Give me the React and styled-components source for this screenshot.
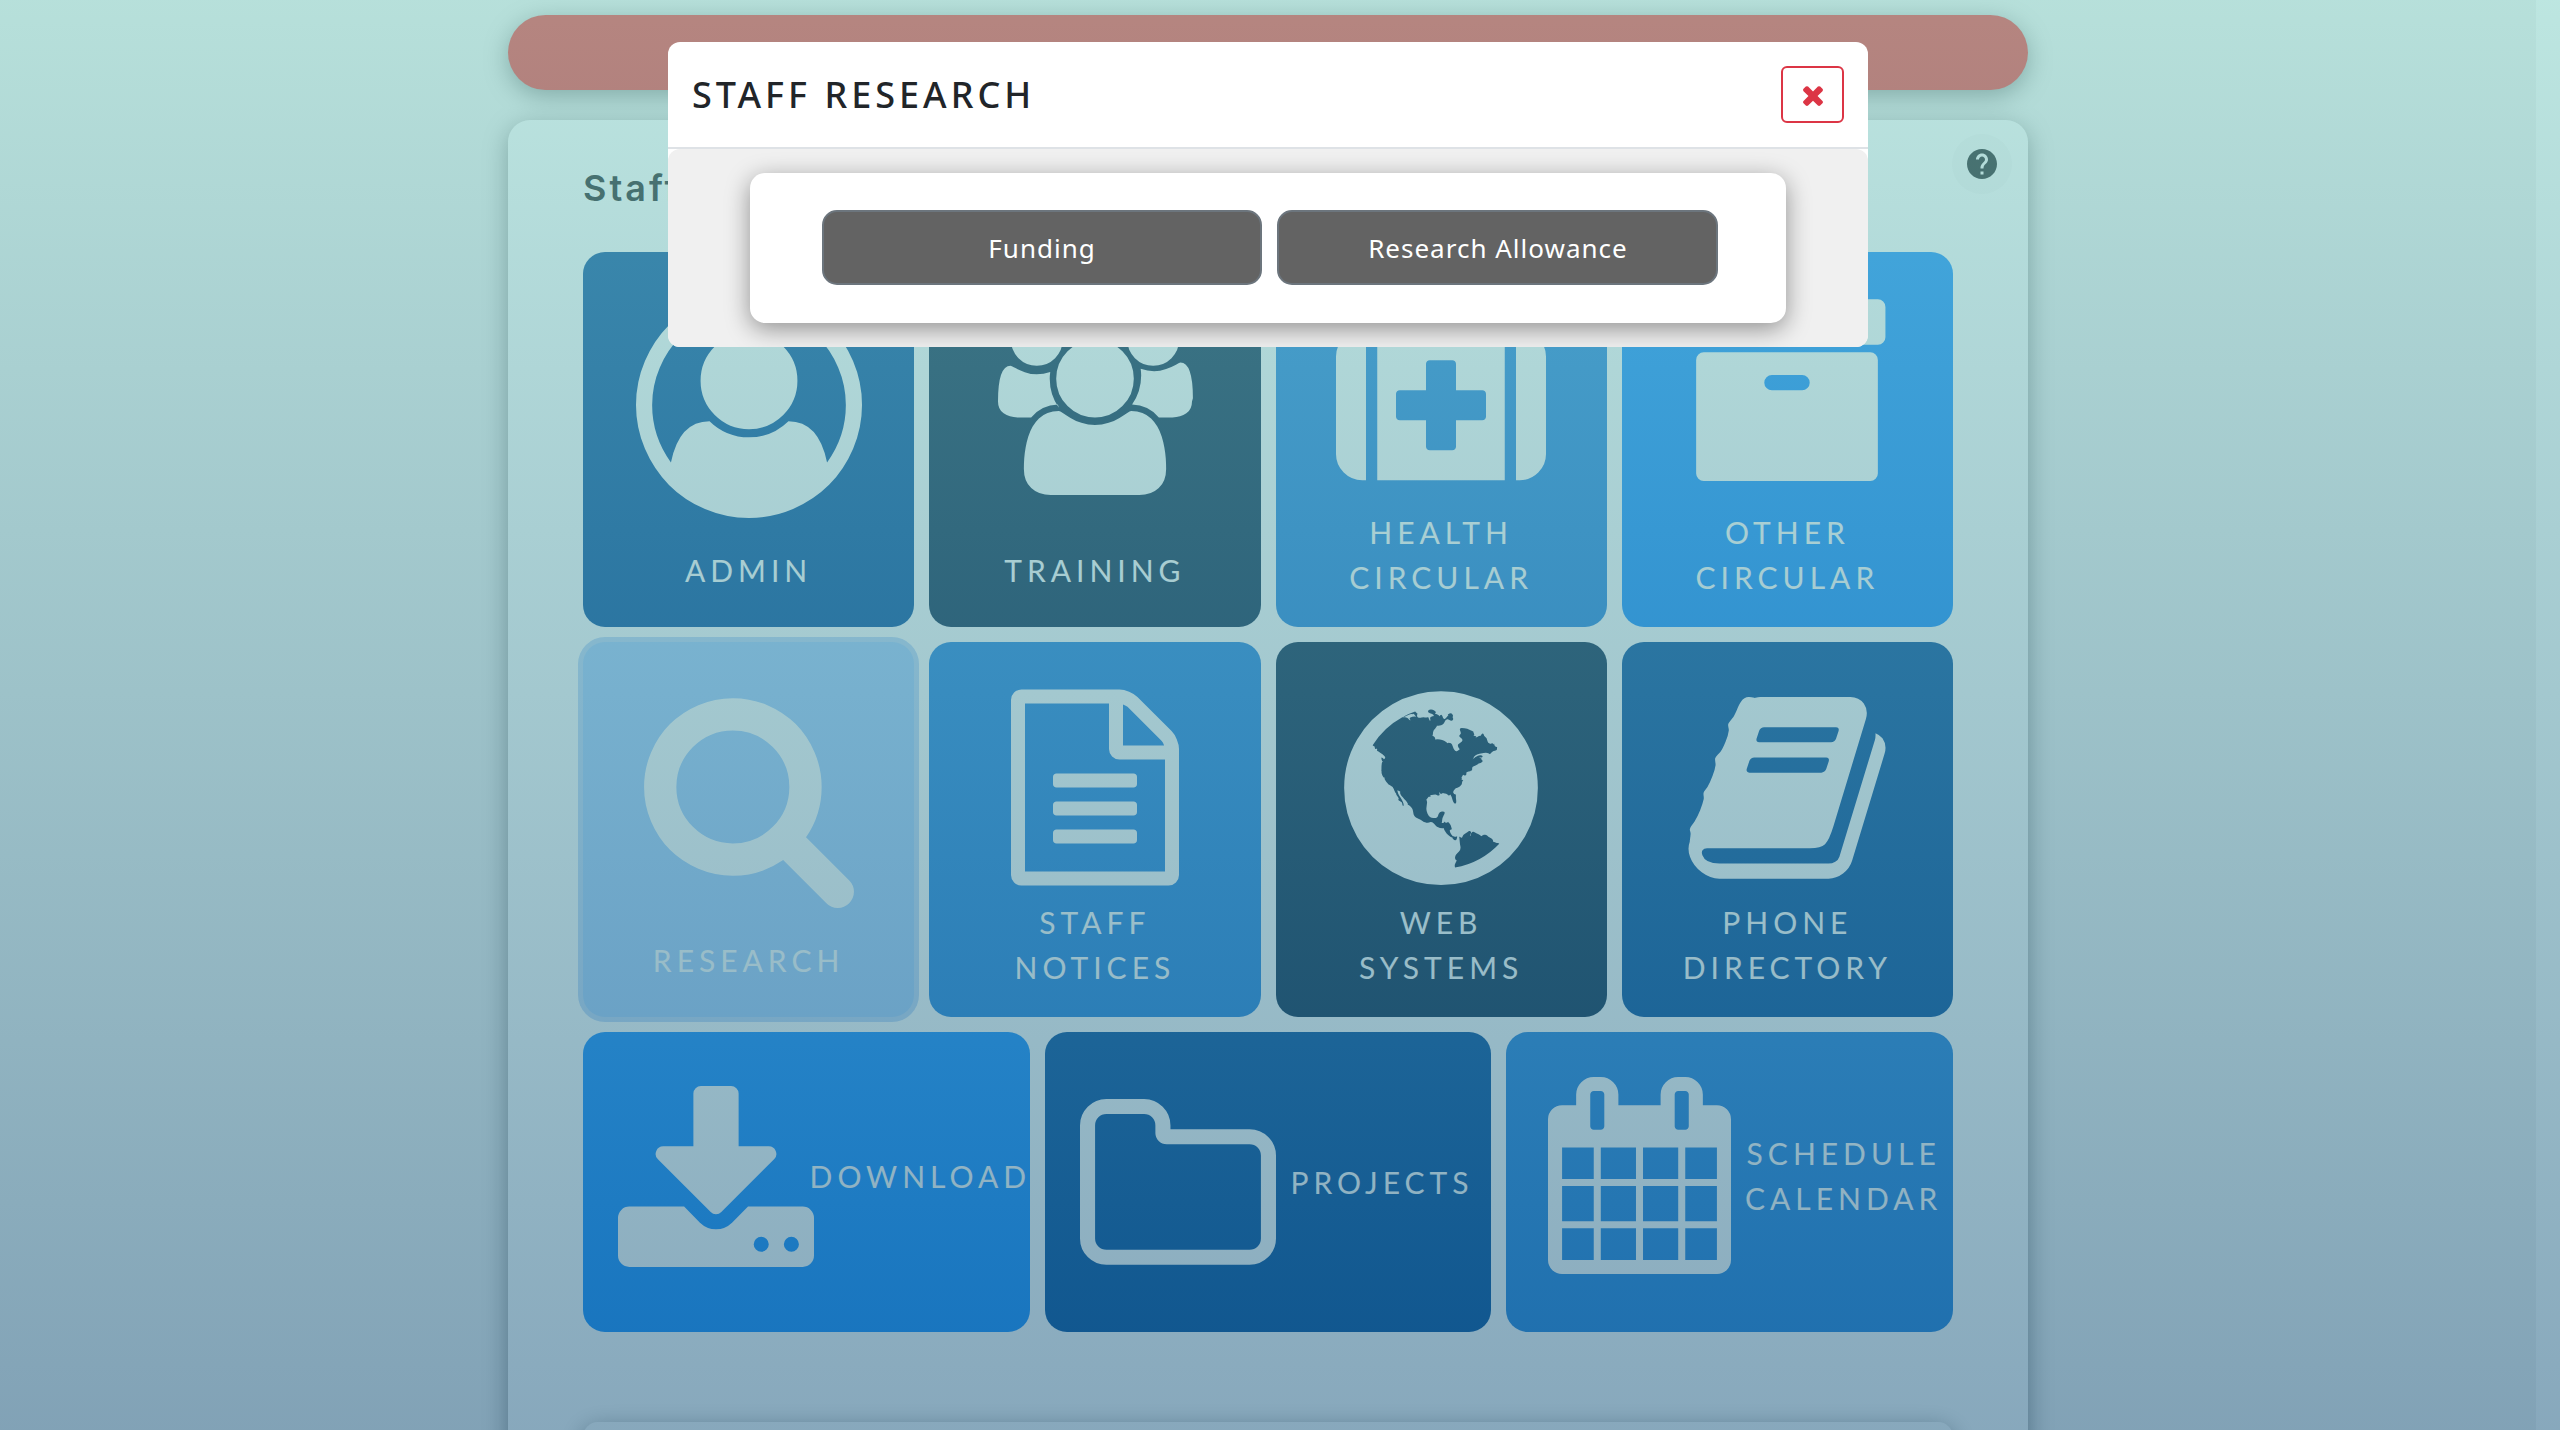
import React from 'react';
import styled, { createGlobalStyle } from 'styled-components';

const GlobalStyle = createGlobalStyle`
  *, *::before, *::after { box-sizing: border-box; }
  body { margin: 0; background: #fff; color: #212529; font-family: "Noto Sans", sans-serif; }
  button { font: inherit; letter-spacing: inherit; cursor: pointer; }
`;

const navy = '#0a55a0';
const ink = '#103355';
const azure = '#2986de';
const sky = '#1a91ff';
const pale = '#a6cffc';
const softShadow = '0 6px 24px rgba(0, 0, 0, 0.4)';

const Page = styled.div`
  height: 100vh;
  overflow: hidden;
  margin-right: 24px;
  padding-top: 15px;
  background: #f2f2f2;
`;

const Container = styled.main`
  width: 100%;
  max-width: 1520px;
  margin: 0 auto;
`;

const Banner = styled.div`
  height: 75px;
  margin-bottom: 30px;
  border-radius: 38px;
  background: #f13f3f;
  box-shadow: ${softShadow};
`;

const Panel = styled.section`
  padding: 0 75px 75px;
  border-radius: 22px;
  background: #fff;
  box-shadow: ${softShadow};
`;

const PanelHeader = styled.header`
  display: flex;
  justify-content: space-between;
  align-items: flex-start;
  height: 132px;
  padding-top: 14px;
  margin-right: -59px;
`;

const PanelTitle = styled.h1`
  margin: 0;
  padding-top: 30px;
  font-family: Inter, sans-serif;
  font-size: 36px;
  font-weight: 600;
  line-height: 48px;
  letter-spacing: 3px;
`;

const HelpButton = styled.button`
  display: grid;
  place-items: center;
  width: 60px;
  height: 60px;
  padding: 0;
  border: 0;
  border-radius: 50%;
  background: #f8f8f8;
  color: #212529;
`;

const Tiles = styled.nav`
  display: grid;
  grid-template-columns: repeat(12, 1fr);
  gap: 15px;
`;

const Tile = styled.button`
  grid-column: span ${(p) => (p.$wide ? 4 : 3)};
  display: flex;
  flex-direction: ${(p) => (p.$wide ? 'row' : 'column')};
  align-items: center;
  justify-content: ${(p) => (p.$wide ? 'flex-start' : 'center')};
  height: ${(p) => (p.$wide ? 300 : 375)}px;
  padding: 0 0 ${(p) => (p.$raised ? 12 : p.$wide ? 0 : 2)}px;
  border: 0;
  border-radius: 22px;
  background: ${(p) => p.$color};
  box-shadow: ${(p) => (p.$focused ? '0 0 0 5px #c0d9f9' : 'none')};
  color: #fff;
  font-family: Lato, sans-serif;
  font-size: 30px;
  line-height: 45px;
  letter-spacing: 5px;
  text-transform: uppercase;
`;

const IconSlot = styled.span`
  flex: none;
  display: flex;
  align-items: center;
  justify-content: center;
  ${(p) =>
    p.$wide
      ? 'width: 228px; padding-left: 38px;'
      : `height: ${p.$double ? 233 : 264}px; padding-bottom: ${p.$double ? 0 : 22}px;`}
`;

const Glyph = styled.svg`
  flex: none;
  overflow: visible;
  fill: currentColor;
`;

const TileLabel = styled.span`
  display: flex;
  flex-direction: column;
  align-items: center;
  ${(p) => p.$wide && 'flex: 1; min-width: 0;'}
`;

const Card = styled.section`
  height: 300px;
  margin-top: 90px;
  border-radius: 15px;
  background: #fff;
  box-shadow: ${softShadow};
`;

const Backdrop = styled.div`
  position: fixed;
  inset: 0;
  padding: 42px 24px 0 0;
  background: linear-gradient(rgba(123, 205, 194, 0.5), rgba(17, 82, 122, 0.5));
`;

const Modal = styled.div`
  max-width: 1200px;
  margin: 0 auto;
  border-radius: 12px;
  background: #fff;
`;

const ModalHeader = styled.header`
  display: flex;
  align-items: center;
  justify-content: space-between;
  padding: 24px;
  border-bottom: 2px solid #dee2e6;
`;

const ModalTitle = styled.h2`
  margin: 0;
  font-size: 36px;
  font-weight: 500;
  line-height: 54px;
  letter-spacing: 4px;
  text-transform: uppercase;
`;

const CloseButton = styled.button`
  display: grid;
  place-items: center;
  width: 63px;
  height: 57px;
  padding: 0;
  border: 2px solid #dc3545;
  border-radius: 6px;
  background: #fff;
  color: #dc3545;
`;

const ModalBody = styled.div`
  padding: 24px;
  border-radius: 12px;
  background: #f0f0f0;
  overflow: hidden;
`;

const Choices = styled.div`
  display: grid;
  grid-template-columns: 1fr 1fr;
  gap: 15px;
  width: 90%;
  margin: 0 auto;
  padding: 37px 68px 38px 72px;
  border-radius: 15px;
  background: #fff;
  box-shadow: ${softShadow};
`;

const ChoiceButton = styled.button`
  height: 75px;
  border: 2px solid #6c757d;
  border-radius: 15px;
  background: #636363;
  color: #fff;
  font-size: 26px;
  letter-spacing: 1px;
`;

const Icon = ({ box = '0 0 1792 1792', width, d }) => (
  <Glyph viewBox={box} width={width} aria-hidden="true">
    <path d={d} />
  </Glyph>
);

const paths = {
  user: 'M896 0q182 0 348 71t286 191 191 286 71 348q0 181-70.5 347t-190.5 286-286 191.5-349 71.5-349-71-285.5-191.5-190.5-286-71-347.5 71-348 191-286 286-191 348-71zm619 1351q149-205 149-455 0-156-61-298t-164-245-245-164-298-61-298 61-245 164-164 245-61 298q0 250 149 455 66-327 306-327 131 128 313 128t313-128q240 0 306 327zm-235-647q0-159-112.5-271.5t-271.5-112.5-271.5 112.5-112.5 271.5 112.5 271.5 271.5 112.5 271.5-112.5 112.5-271.5z',
  users: 'M593 896q-162 5-265 128h-134q-82 0-138-40.5t-56-118.5q0-353 124-353 6 0 43.5 21t97.5 42.5 119 21.5q67 0 133-23-5 37-5 66 0 159 90 287zm1071 637q0 120-73 189.5t-194 69.5h-874q-121 0-194-69.5t-73-189.5q0-53 3.5-103.5t14-109 26.5-108.5 43-97.5 62-81 85.5-53.5 111.5-20q10 0 43 21.5t73 48 107 48 135 21.5 135-21.5 107-48 73-48 43-21.5q61 0 111.5 20t85.5 53.5 62 81 43 97.5 26.5 108.5 14 109 3.5 103.5zm-1024-1277q0 106-75 181t-181 75-181-75-75-181 75-181 181-75 181 75 75 181zm704 384q0 159-112.5 271.5t-271.5 112.5-271.5-112.5-112.5-271.5 112.5-271.5 271.5-112.5 271.5 112.5 112.5 271.5zm576 225q0 78-56 118.5t-138 40.5h-134q-103-123-265-128 90-128 90-287 0-29-5-66 66 23 133 23 59 0 119-21.5t97.5-42.5 43.5-21q124 0 124 353zm-128-609q0 106-75 181t-181 75-181-75-75-181 75-181 181-75 181 75 75 181z',
  medkit: 'M1280 1120v-192q0-14-9-23t-23-9h-224v-224q0-14-9-23t-23-9h-192q-14 0-23 9t-9 23v224h-224q-14 0-23 9t-9 23v192q0 14 9 23t23 9h224v224q0 14 9 23t23 9h192q14 0 23-9t9-23v-224h224q14 0 23-9t9-23zm-640-736h512v-128h-512v128zm-384 0v1280h-32q-92 0-158-66t-66-158v-832q0-92 66-158t158-66h32zm1184 0v1280h-1088v-1280h160v-160q0-40 28-68t68-28h576q40 0 68 28t28 68v160h160zm352 224v832q0 92-66 158t-158 66h-32v-1280h32q92 0 158 66t66 158z',
  archive: 'M1088 832q0-26-19-45t-45-19h-256q-26 0-45 19t-19 45 19 45 45 19h256q26 0 45-19t19-45zm576-192v960q0 26-19 45t-45 19h-1408q-26 0-45-19t-19-45v-960q0-26 19-45t45-19h1408q26 0 45 19t19 45zm64-448v256q0 26-19 45t-45 19h-1536q-26 0-45-19t-19-45v-256q0-26 19-45t45-19h1536q26 0 45 19t19 45z',
  search: 'M1216 832q0-185-131.5-316.5t-316.5-131.5-316.5 131.5-131.5 316.5 131.5 316.5 316.5 131.5 316.5-131.5 131.5-316.5zm512 832q0 52-38 90t-90 38q-54 0-90-38l-343-342q-179 124-399 124-143 0-273.5-55.5t-225-150-150-225-55.5-273.5 55.5-273.5 150-225 225-150 273.5-55.5 273.5 55.5 225 150 150 225 55.5 273.5q0 220-124 399l343 343q37 37 37 90z',
  file: 'M1596 380q28 28 48 76t20 88v1152q0 40-28 68t-68 28h-1344q-40 0-68-28t-28-68v-1600q0-40 28-68t68-28h896q40 0 88 20t76 48zm-444-244v376h376q-10-29-22-41l-313-313q-12-12-41-22zm384 1528v-1024h-416q-40 0-68-28t-28-68v-416h-768v1536h1280zm-1024-864q0-14 9-23t23-9h704q14 0 23 9t9 23v64q0 14-9 23t-23 9h-704q-14 0-23-9t-9-23v-64zm736 224q14 0 23 9t9 23v64q0 14-9 23t-23 9h-704q-14 0-23-9t-9-23v-64q0-14 9-23t23-9h704zm0 256q14 0 23 9t9 23v64q0 14-9 23t-23 9h-704q-14 0-23-9t-9-23v-64q0-14 9-23t23-9h704z',
  globe: 'M896 128q209 0 385.5 103t279.5 279.5 103 385.5-103 385.5-279.5 279.5-385.5 103-385.5-103-279.5-279.5-103-385.5 103-385.5 279.5-279.5 385.5-103zm274 521q-2 1-9.5 9.5t-13.5 9.5q2 0 4.5-5t5-11 3.5-7q6-7 22-15 14-6 52-12 34-8 51 11-2-2 9.5-13t14.5-12q3-2 15-4.5t15-7.5l2-22q-12 1-17.5-7t-6.5-21q0 2-6 8 0-7-4.5-8t-11.5 1-9 1q-10-3-15-7.5t-8-16.5-4-15q-2-5-9.5-11t-9.5-10q-1-2-2.5-5.5t-3-6.5-4-5.5-5.5-2.5-7 5-7.5 10-4.5 5q-3-2-6-1.5t-4.5 1-4.5 3-5 3.5q-3 2-8.5 3t-8.5 2q15-5-1-11-10-4-16-3 9-4 7.5-12t-8.5-14h5q-1-4-8.5-8.5t-17.5-8.5-13-6q-8-5-34-9.5t-33-.5q-5 6-4.5 10.5t4 14 3.5 12.5q1 6-5.5 13t-6.5 12q0 7 14 15.5t10 21.5q-3 8-16 16t-16 12q-5 8-1.5 18.5t10.5 16.5q2 2 1.5 4t-3.5 4.5-5.5 4-6.5 3.5l-3 2q-11 5-20.5-6t-13.5-26q-7-25-16-30-23-8-29 1-5-13-41-26-25-9-58-4 6-1 0-15-7-15-19-12 3-6 4-17.5t1-13.5q3-13 12-23 1-1 7-8.5t9.5-13.5.5-6q35 4 50-11 5-5 11.5-17t10.5-17q9-6 14-5.5t14.5 5.5 14.5 5q14 1 15.5-11t-7.5-20q12 1 3-17-4-7-8-9-12-4-27 5-8 4 2 8-1-1-9.5 10.5t-16.5 17.5-16-5q-1-1-5.5-13.5t-9.5-13.5q-8 0-16 15 3-8-11-15t-24-8q19-12-8-27-7-4-20.5-5t-19.5 4q-5 7-5.5 11.5t5 8 10.5 5.5 11.5 4 8.5 3q14 10 8 14-2 1-8.5 3.5t-11.5 4.5-6 4q-3 4 0 14t-2 14q-5-5-9-17.5t-7-16.5q7 9-25 6l-10-1q-4 0-16 2t-20.5 1-13.5-8q-4-8 0-20 1-4 4-2-4-3-11-9.5t-10-8.5q-46 15-94 41 6 1 12-1 5-2 13-6.5t10-5.5q34-14 42-7l5-5q14 16 20 25-7-4-30-1-20 6-22 12 7 12 5 18-4-3-11.5-10t-14.5-11-15-5q-16 0-22 1-146 80-235 222 7 7 12 8 4 1 5 9t2.5 11 11.5-3q9 8 3 19 1-1 44 27 19 17 21 21 3 11-10 18-1-2-9-9t-9-4q-3 5 .5 18.5t10.5 12.5q-7 0-9.5 16t-2.5 35.5-1 23.5l2 1q-3 12 5.5 34.5t21.5 19.5q-13 3 20 43 6 8 8 9 3 2 12 7.5t15 10 10 10.5q4 5 10 22.5t14 23.5q-2 6 9.5 20t10.5 23q-1 0-2.5 1t-2.5 1q3 7 15.5 14t15.5 13q1 3 2 10t3 11 8 2q2-20-24-62-15-25-17-29-3-5-5.5-15.5t-4.5-14.5q2 0 6 1.5t8.5 3.5 7.5 4 2 3q-3 7 2 17.5t12 18.5 17 19 12 13q6 6 14 19.5t0 13.5q9 0 20 10.5t17 19.5q5 8 8 26t5 24q2 7 8.5 13.5t12.5 9.5l16 8 13 7q5 2 18.5 10.5t21.5 11.5q10 4 16 4t14.5-2.5 13.5-3.5q15-2 29 15t21 21q36 19 55 11-2 1 .5 7.5t8 15.5 9 14.5 5.5 8.5q5 6 18 15t18 15q6-4 7-9-3 8 7 20t18 10q14-3 14-32-31 15-49-18 0-1-2.5-5.5t-4-8.5-2.5-8.5 0-7.5 5-3q9 0 10-3.5t-2-12.5-4-13q-1-8-11-20t-12-15q-5 9-16 8t-16-9q0 1-1.5 5.5t-1.5 6.5q-13 0-15-1 1-3 2.5-17.5t3.5-22.5q1-4 5.5-12t7.5-14.5 4-12.5-4.5-9.5-17.5-2.5q-19 1-26 20-1 3-3 10.5t-5 11.5-9 7q-7 3-24 2t-24-5q-13-8-22.5-29t-9.5-37q0-10 2.5-26.5t3-25-5.5-24.5q3-2 9-9.5t10-10.5q2-1 4.5-1.5t4.5 0 4-1.5 3-6q-1-1-4-3-3-3-4-3 7 3 28.5-1.5t27.5 1.5q15 11 22-2 0-1-2.5-9.5t-.5-13.5q5 27 29 9 3 3 15.5 5t17.5 5q3 2 7 5.5t5.5 4.5 5-.5 8.5-6.5q10 14 12 24 11 40 19 44 7 3 11 2t4.5-9.5 0-14-1.5-12.5l-1-8v-18l-1-8q-15-3-18.5-12t1.5-18.5 15-18.5q1-1 8-3.5t15.5-6.5 12.5-8q21-19 15-35 7 0 11-9-1 0-5-3t-7.5-5-4.5-2q9-5 2-16 5-3 7.5-11t7.5-10q9 12 21 2 8-8 1-16 5-7 20.5-10.5t18.5-9.5q7 2 8-2t1-12 3-12q4-5 15-9t13-5l17-11q3-4 0-4 18 2 31-11 10-11-6-20 3-6-3-9.5t-15-5.5q3-1 11.5-.5t10.5-1.5q15-10-7-16-17-5-43 12zm-163 877q206-36 351-189-3-3-12.5-4.5t-12.5-3.5q-18-7-24-8 1-7-2.5-13t-8-9-12.5-8-11-7q-2-2-7-6t-7-5.5-7.5-4.5-8.5-2-10 1l-3 1q-3 1-5.5 2.5t-5.5 3-4 3 0 2.5q-21-17-36-22-5-1-11-5.5t-10.5-7-10-1.5-11.5 7q-5 5-6 15t-2 13q-7-5 0-17.5t2-18.5q-3-6-10.5-4.5t-12 4.5-11.5 8.5-9 6.5-8.5 5.5-8.5 7.5q-3 4-6 12t-5 11q-2-4-11.5-6.5t-9.5-5.5q2 10 4 35t5 38q7 31-12 48-27 25-29 40-4 22 12 26 0 7-8 20.5t-7 21.5q0 6 2 16z',
  book: 'M1703 478q40 57 18 129l-275 906q-19 64-76.5 107.5t-122.5 43.5h-923q-77 0-148.5-53.5t-99.5-131.5q-24-67-2-127 0-4 3-27t4-37q1-8-3-21.5t-3-19.5q2-11 8-21t16.5-23.5 16.5-23.5q23-38 45-91.5t30-91.5q3-10 .5-30t-.5-28q3-11 17-28t17-23q21-36 42-92t25-90q1-9-2.5-32t.5-28q4-13 22-30.5t22-22.5q19-26 42.5-84.5t27.5-96.5q1-8-3-25.5t-2-26.5q2-8 9-18t18-23 17-21q8-12 16.5-30.5t15-35 16-36 19.5-32 26.5-23.5 36-11.5 47.5 5.5l-1 3q38-9 51-9h761q74 0 114 56t18 130l-274 906q-36 119-71.5 153.5t-128.5 34.5h-869q-27 0-38 15-11 16-1 43 24 70 144 70h923q29 0 56-15.5t35-41.5l300-987q7-22 5-57 38 15 59 43zm-1064 2q-4 13 2 22.5t20 9.5h608q13 0 25.5-9.5t16.5-22.5l21-64q4-13-2-22.5t-20-9.5h-608q-13 0-25.5 9.5t-16.5 22.5zm-83 256q-4 13 2 22.5t20 9.5h608q13 0 25.5-9.5t16.5-22.5l21-64q4-13-2-22.5t-20-9.5h-608q-13 0-25.5 9.5t-16.5 22.5z',
  download: 'M1344 1344q0-26-19-45t-45-19-45 19-19 45 19 45 45 19 45-19 19-45zm256 0q0-26-19-45t-45-19-45 19-19 45 19 45 45 19 45-19 19-45zm128-224v320q0 40-28 68t-68 28h-1472q-40 0-68-28t-28-68v-320q0-40 28-68t68-28h465l135 136q58 56 136 56t136-56l136-136h464q40 0 68 28t28 68zm-325-569q17 41-14 70l-448 448q-18 19-45 19t-45-19l-448-448q-31-29-14-70 17-39 59-39h256v-448q0-26 19-45t45-19h256q26 0 45 19t19 45v448h256q42 0 59 39z',
  folder: 'M1600 1312v-704q0-40-28-68t-68-28h-704q-40 0-68-28t-28-68v-64q0-40-28-68t-68-28h-320q-40 0-68 28t-28 68v960q0 40 28 68t68 28h1216q40 0 68-28t28-68zm128-704v704q0 92-66 158t-158 66h-1216q-92 0-158-66t-66-158v-960q0-92 66-158t158-66h320q92 0 158 66t66 158v32h672q92 0 158 66t66 158z',
  calendar: 'M192 1664h288v-288h-288v288zm352 0h320v-288h-320v288zm-352-352h288v-320h-288v320zm352 0h320v-320h-320v320zm-352-384h288v-288h-288v288zm736 736h320v-288h-320v288zm-384-736h320v-288h-320v288zm768 736h288v-288h-288v288zm-384-352h320v-320h-320v320zm-352-864v-288q0-13-9.5-22.5t-22.5-9.5h-64q-13 0-22.5 9.5t-9.5 22.5v288q0 13 9.5 22.5t22.5 9.5h64q13 0 22.5-9.5t9.5-22.5zm736 864h288v-320h-288v320zm-384-384h320v-288h-320v288zm384 0h288v-288h-288v288zm32-480v-288q0-13-9.5-22.5t-22.5-9.5h-64q-13 0-22.5 9.5t-9.5 22.5v288q0 13 9.5 22.5t22.5 9.5h64q13 0 22.5-9.5t9.5-22.5zm384-64v1280q0 52-38 90t-90 38h-1408q-52 0-90-38t-38-90v-1280q0-52 38-90t90-38h128v-96q0-66 47-113t113-47h64q66 0 113 47t47 113v96h384v-96q0-66 47-113t113-47h64q66 0 113 47t47 113v96h128q52 0 90 38t38 90z',
  times: 'M1490 1322q0 40-28 68l-136 136q-28 28-68 28t-68-28l-294-294-294 294q-28 28-68 28t-68-28l-136-136q-28-28-28-68t28-68l294-294-294-294q-28-28-28-68t28-68l136-136q28-28 68-28t68 28l294 294 294-294q28-28 68-28t68 28l136 136q28 28 28 68t-28 68l-294 294 294 294q28 28 28 68z',
  help: 'M12 2C6.48 2 2 6.48 2 12s4.48 10 10 10 10-4.48 10-10S17.52 2 12 2zm1 17h-2v-2h2v2zm2.07-7.75-.9.92C13.45 12.9 13 13.5 13 15h-2v-.5c0-1.1.45-2.1 1.17-2.83l1.24-1.26c.37-.36.59-.86.59-1.41 0-1.1-.9-2-2-2s-2 .9-2 2H8c0-2.21 1.79-4 4-4s4 1.79 4 4c0 .88-.36 1.68-.93 2.25z',
};

const tiles = [
  { lines: ['Admin'], color: navy, icon: 'user', width: 226 },
  { lines: ['Training'], color: ink, icon: 'users', width: 194, box: '0 0 1920 1792' },
  { lines: ['Health', 'Circular'], color: azure, icon: 'medkit', width: 210, box: '0 32 1792 1792' },
  { lines: ['Other', 'Circular'], color: sky, icon: 'archive', width: 212, box: '0 32 1792 1792' },
  { lines: ['Research'], color: pale, icon: 'search', width: 226, focused: true },
  { lines: ['Staff', 'Notices'], color: azure, icon: 'file', width: 196, box: '0 -32 1792 1792' },
  { lines: ['Web', 'Systems'], color: ink, icon: 'globe', width: 226, box: '0 -32 1792 1792' },
  { lines: ['Phone', 'Directory'], color: navy, icon: 'book', width: 212, box: '0 -32 1792 1792' },
  { lines: ['Download'], color: sky, icon: 'download', width: 196, box: '64 0 1664 1536', wide: true, raised: true },
  { lines: ['Projects'], color: navy, icon: 'folder', width: 196, box: '64 128 1664 1408', wide: true },
  { lines: ['Schedule', 'Calendar'], color: azure, icon: 'calendar', width: 183, box: '64 0 1664 1792', wide: true, raised: true },
];

export default function App() {
  return (
    <>
      <GlobalStyle />
      <Page>
        <Container>
          <Banner />
          <Panel>
            <PanelHeader>
              <PanelTitle>Staff</PanelTitle>
              <HelpButton type="button" aria-label="Help">
                <Icon box="0 0 24 24" width={36} d={paths.help} />
              </HelpButton>
            </PanelHeader>
            <Tiles>
              {tiles.map((t) => (
                <Tile
                  key={t.icon}
                  type="button"
                  $color={t.color}
                  $wide={t.wide}
                  $raised={t.raised}
                  $focused={t.focused}
                >
                  <IconSlot $wide={t.wide} $double={t.lines.length > 1}>
                    <Icon box={t.box} width={t.width} d={paths[t.icon]} />
                  </IconSlot>
                  <TileLabel $wide={t.wide}>
                    {t.lines.map((line) => (
                      <span key={line}>{line}</span>
                    ))}
                  </TileLabel>
                </Tile>
              ))}
            </Tiles>
            <Card />
          </Panel>
        </Container>
      </Page>
      <Backdrop>
        <Modal role="dialog" aria-modal="true" aria-labelledby="modal-title">
          <ModalHeader>
            <ModalTitle id="modal-title">Staff Research</ModalTitle>
            <CloseButton type="button" aria-label="Close">
              <Icon width={30} d={paths.times} />
            </CloseButton>
          </ModalHeader>
          <ModalBody>
            <Choices>
              <ChoiceButton type="button">Funding</ChoiceButton>
              <ChoiceButton type="button">Research Allowance</ChoiceButton>
            </Choices>
          </ModalBody>
        </Modal>
      </Backdrop>
    </>
  );
}
